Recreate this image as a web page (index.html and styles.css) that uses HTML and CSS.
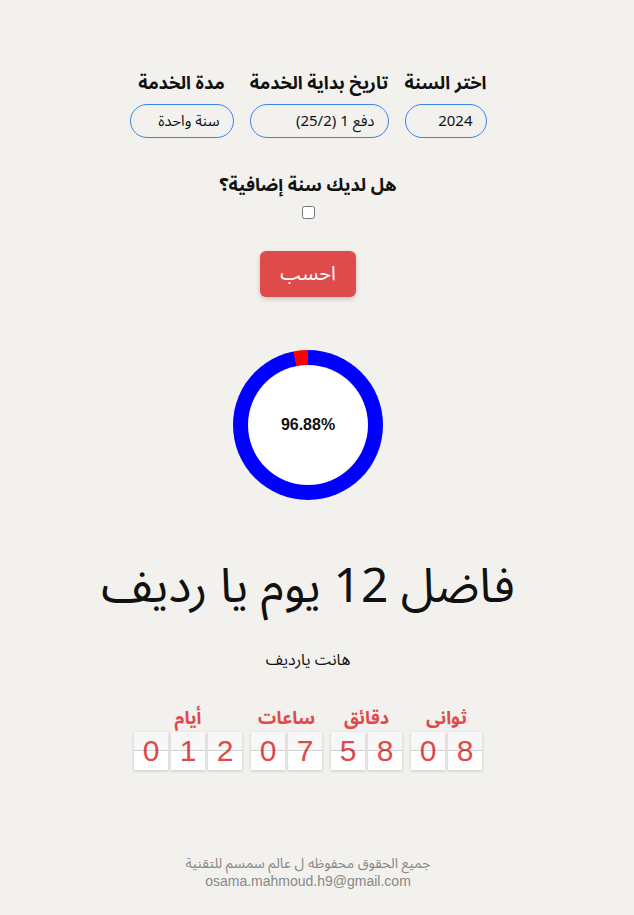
FILE: index.html
```html
<!DOCTYPE html>
<html lang="ar" dir="rtl">
<head>
<meta charset="utf-8">
<title>عداد الخدمة</title>
<link rel="stylesheet" href="styles.css">
</head>
<body>
<div class="page">
  <div class="fields">
    <div class="field f-year">
      <label class="field-label">اختر السنة</label>
      <div class="select">2024</div>
    </div>
    <div class="field f-start">
      <label class="field-label">تاريخ بداية الخدمة</label>
      <div class="select">دفع 1 (25/2)</div>
    </div>
    <div class="field f-dur">
      <label class="field-label">مدة الخدمة</label>
      <div class="select">سنة واحدة</div>
    </div>
  </div>

  <div class="extra">
    <div class="extra-label">هل لديك سنة إضافية؟</div>
    <input type="checkbox" class="check">
  </div>

  <button class="calc">احسب</button>

  <div class="donut">
    <div class="donut-inner">96.88%</div>
  </div>

  <h1 class="headline">فاضل 12 يوم يا رديف</h1>
  <p class="sub">هانت يارديف</p>

  <div class="counter">
    <div class="unit u-sec">
      <div class="unit-label">ثوانى</div>
      <div class="cards"><span class="card">0</span><span class="card">8</span></div>
    </div>
    <div class="unit u-min">
      <div class="unit-label">دقائق</div>
      <div class="cards"><span class="card">5</span><span class="card">8</span></div>
    </div>
    <div class="unit u-hr">
      <div class="unit-label">ساعات</div>
      <div class="cards"><span class="card">0</span><span class="card">7</span></div>
    </div>
    <div class="unit u-day">
      <div class="unit-label">أيام</div>
      <div class="cards"><span class="card">0</span><span class="card">1</span><span class="card">2</span></div>
    </div>
  </div>

  <footer class="footer">
    <div class="rights">جميع الحقوق محفوظه ل عالم سمسم للتقنية</div>
    <div class="email">osama.mahmoud.h9@gmail.com</div>
  </footer>
</div>
</body>
</html>
```

FILE: styles.css
```css
* { box-sizing: border-box; }
html, body { margin: 0; padding: 0; }
body {
  background: #f2f1ee;
  font-family: "Noto Sans Arabic", "Noto Sans", "DejaVu Sans", sans-serif;
  color: #111;
}
.page {
  width: 100%;
  padding: 70px 18px 0 0;
  display: flex;
  flex-direction: column;
  align-items: center;
}
.fields {
  display: flex;
  flex-direction: row;
  gap: 16px;
  align-items: flex-start;
}
.field {
  display: flex;
  flex-direction: column;
  align-items: center;
  gap: 8px;
}
.f-year { width: 82px; }
.f-start { width: 139px; }
.f-dur { width: 104px; }
.field-label {
  font-weight: 700;
  font-size: 18px;
  line-height: 26px;
  white-space: nowrap;
}
.select {
  width: 100%;
  height: 34px;
  border: 1px solid #3c84e8;
  border-radius: 17px;
  font-size: 15px;
  line-height: 32px;
  padding: 0 13px;
  text-align: right;
  white-space: nowrap;
  color: #111;
}
.extra {
  margin-top: 34px;
  display: flex;
  flex-direction: column;
  align-items: center;
}
.extra-label {
  font-weight: 700;
  font-size: 18px;
  line-height: 26px;
}
.check {
  margin: 8px 0 0 0;
  width: 13px;
  height: 13px;
}
.calc {
  margin-top: 32px;
  width: 96px;
  height: 46px;
  border: none;
  border-radius: 6px;
  background: #df4a4b;
  color: #fff;
  font-family: inherit;
  font-size: 20px;
  box-shadow: 0 2px 5px rgba(0,0,0,0.2);
}
.donut {
  margin-top: 53px;
  width: 150px;
  height: 150px;
  border-radius: 50%;
  background: conic-gradient(#0000ff 0 96.88%, #ff0000 96.88% 100%);
  display: flex;
  align-items: center;
  justify-content: center;
}
.donut-inner {
  width: 120px;
  height: 120px;
  border-radius: 50%;
  background: #fff;
  display: flex;
  align-items: center;
  justify-content: center;
  font-family: "Liberation Sans", Arial, sans-serif;
  font-weight: 700;
  font-size: 16px;
  color: #111;
}
.headline {
  margin: 55px 0 0 0;
  font-weight: 400;
  font-size: 48px;
  line-height: 64px;
}
.sub {
  margin: 30px 0 0 0;
  font-size: 16px;
  line-height: 22px;
}
.counter {
  margin-top: 36px;
  display: flex;
  flex-direction: row;
  gap: 9px;
}
.unit {
  display: flex;
  flex-direction: column;
  align-items: center;
}
.unit-label {
  color: #df4a4b;
  font-weight: 700;
  font-size: 18px;
  line-height: 22px;
  margin-bottom: 3px;
}
.cards {
  display: flex;
  flex-direction: row-reverse;
  gap: 3px;
}
.card {
  position: relative;
  width: 34px;
  height: 38px;
  background: linear-gradient(#f7f7f7 0 50%, #ffffff 50% 100%);
  box-shadow: 0 1px 3px rgba(0,0,0,0.18);
  color: #df4a4b;
  font-family: "Liberation Sans", Arial, sans-serif;
  font-size: 30px;
  line-height: 38px;
  text-align: center;
}
.card::after {
  content: "";
  position: absolute;
  left: 0;
  right: 0;
  top: 18px;
  height: 1px;
  background: rgba(0,0,0,0.15);
}
.footer {
  margin-top: 85px;
  text-align: center;
  color: #888;
  font-size: 14px;
}
.rights {
  line-height: 17px;
}
.email {
  font-family: "Liberation Sans", Arial, sans-serif;
  line-height: 18px;
}
```
